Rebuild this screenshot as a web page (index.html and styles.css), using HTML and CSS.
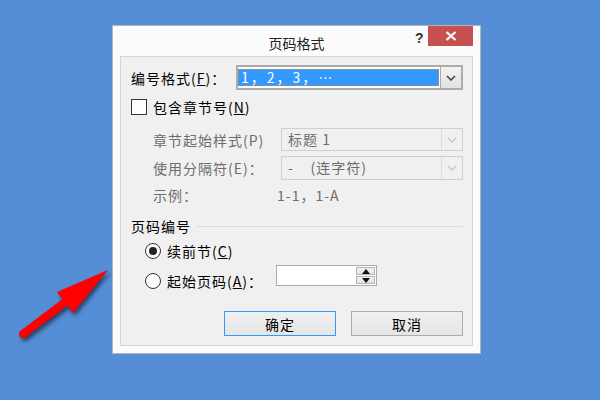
FILE: index.html
```html
<!DOCTYPE html>
<html>
<head>
<meta charset="utf-8">
<link rel="stylesheet" href="styles.css">
</head>
<body>
<div class="desk">
  <div class="dialog">
    <div class="titlebar">
      <span class="title">页码格式</span>
      <span class="help">?</span>
      <span class="close"><svg width="12" height="10" viewBox="0 0 12 10"><path d="M1.5 1 L10.5 9 M10.5 1 L1.5 9" stroke="#fff" stroke-width="2.2" fill="none"/></svg></span>
    </div>
    <div class="panel">
      <div class="row r-fmt">
        <span class="lbl w-main">编号格式(<u>F</u>)：</span>
        <div class="combo focus">
          <div class="sel">1，2，3，…</div>
          <div class="dbtn"><svg width="10" height="6" viewBox="0 0 10 6"><path d="M1 1 L5 5 L9 1" stroke="#444" stroke-width="1.6" fill="none"/></svg></div>
        </div>
      </div>
      <div class="row r-chk">
        <span class="box"></span>
        <span class="lbl">包含章节号(<u>N</u>)</span>
      </div>
      <div class="row r-sub1 sub">
        <span class="lbl w-sub dis">章节起始样式(P)</span>
        <div class="combo off">
          <div class="val">标题 1</div>
          <div class="dbtn"><svg width="10" height="6" viewBox="0 0 10 6"><path d="M1 1 L5 5 L9 1" stroke="#c8c8c8" stroke-width="1.4" fill="none"/></svg></div>
        </div>
      </div>
      <div class="row r-sub2 sub">
        <span class="lbl w-sub dis">使用分隔符(E)：</span>
        <div class="combo off">
          <div class="val">-&nbsp;&nbsp;&nbsp;&nbsp;(连字符)</div>
          <div class="dbtn"><svg width="10" height="6" viewBox="0 0 10 6"><path d="M1 1 L5 5 L9 1" stroke="#c8c8c8" stroke-width="1.4" fill="none"/></svg></div>
        </div>
      </div>
      <div class="row r-ex sub">
        <span class="lbl w-ex dis">示例：</span>
        <span class="lbl dis">1-1，1-A</span>
      </div>
      <div class="row r-grp">
        <span class="lbl">页码编号</span>
        <span class="rule"></span>
      </div>
      <div class="row r-rad1 rad">
        <span class="radio on"></span>
        <span class="lbl">续前节(<u>C</u>)</span>
      </div>
      <div class="row r-rad2 rad">
        <div class="radlbl">
          <span class="radio"></span>
          <span class="lbl w-rad">起始页码(<u>A</u>)：</span>
        </div>
        <div class="spin">
          <div class="spin-in"></div>
          <div class="spin-btns">
            <div class="sb"><svg width="8" height="5" viewBox="0 0 8 5"><path d="M0 5 L4 0 L8 5 Z" fill="#111"/></svg></div>
            <div class="sb"><svg width="8" height="5" viewBox="0 0 8 5"><path d="M0 0 L4 5 L8 0 Z" fill="#111"/></svg></div>
          </div>
        </div>
      </div>
      <div class="row r-btns">
        <div class="btn default">确定</div>
        <div class="btn">取消</div>
      </div>
    </div>
  </div>
  <svg class="arrow" width="110" height="100" viewBox="10 255 110 100">
    <g class="arrow-g">
      <path d="M23 334 L72 297" stroke="#ff0000" stroke-width="8" stroke-linecap="round" fill="none"/>
      <path d="M108 270 L57 292 L73 313 Z" fill="#ff0000"/>
    </g>
  </svg>
</div>
</body>
</html>
```
FILE: styles.css
```css
* { box-sizing: border-box; }
html, body { margin: 0; padding: 0; }
body {
  background: #558ed6;
  font-family: "Noto Sans CJK SC", "Liberation Sans", sans-serif;
  font-size: 14px;
  color: #000;
}
.desk {
  position: relative;
  width: 600px;
  height: 400px;
  padding: 25px 0 0 112px;
}
.dialog {
  width: 369px;
  height: 329px;
  background: #fbfbfb;
  border: 1px solid #b4b4b4;
  padding: 0 7px 7px 7px;
  display: flex;
  flex-direction: column;
}
.titlebar {
  position: relative;
  height: 30px;
  display: flex;
  align-items: center;
  justify-content: center;
}
.title {
  font-size: 14px;
  line-height: 16px;
  color: #222;
  margin-top: 3px;
}
.help {
  position: absolute;
  left: 295px;
  top: 4px;
  font-family: "Liberation Sans", sans-serif;
  font-weight: bold;
  font-size: 14px;
  color: #333;
}
.close {
  position: absolute;
  right: 0;
  top: 0;
  width: 45px;
  height: 20px;
  background: #c75050;
  display: flex;
  align-items: center;
  justify-content: center;
}
.close svg { display: block; }
.panel {
  flex: 1;
  background: #f0f0f0;
  border: 1px solid #d5d5d5;
  padding: 8px 9px 0 10px;
  display: flex;
  flex-direction: column;
}
.row {
  display: flex;
  align-items: center;
}
.lbl {
  white-space: nowrap;
  line-height: 16px;
  letter-spacing: 1px;
}
.lbl u { text-decoration: underline; text-underline-offset: 1px; }
.dis { color: #6d6d6d; }
.w-main { width: 105px; }
.w-sub { width: 128px; }
.w-ex { width: 124px; }
.w-rad { width: 109px; }
.sub { padding-left: 22px; }

.r-fmt { height: 25px; }
.combo {
  flex: 1;
  display: flex;
  height: 100%;
  background: #fff;
}
.combo.focus {
  border: 2px solid #ababab;
  padding: 2px 0 2px 0;
  background: #fff;
}
.sel {
  flex: 1;
  background: #3399ff;
  color: #fff;
  outline: 1px dotted #c98a3a;
  outline-offset: -1px;
  padding-left: 3px;
  line-height: 17px;
  letter-spacing: 2px;
  font-size: 14px;
}
.combo.focus .dbtn {
  width: 21px;
  margin: -2px 0 -2px 1px;
  background: linear-gradient(#f2f2f2, #e3e3e3);
  border-left: 1px solid #ababab;
  display: flex;
  align-items: center;
  justify-content: center;
}
.r-chk { height: 16px; margin-top: 9px; }
.box {
  width: 16px;
  height: 16px;
  border: 1px solid #333;
  background: #fff;
  margin-right: 6px;
}
.r-sub1 { height: 23px; margin-top: 13px; }
.r-sub2 { height: 24px; margin-top: 5px; }
.combo.off {
  border: 1px solid #d0d0d0;
  background: #f0f0f0;
  color: #6d6d6d;
}
.val {
  flex: 1;
  padding-left: 6px;
  line-height: 21px;
  letter-spacing: 1px;
}
.combo.off .dbtn {
  width: 21px;
  border-left: 1px solid #dcdcdc;
  display: flex;
  align-items: center;
  justify-content: center;
}
.r-ex { height: 17px; margin-top: 6px; }
.r-grp { height: 16px; margin-top: 15px; }
.rule {
  flex: 1;
  height: 1px;
  background: #dcdcdc;
  margin-left: 6px;
}
.rad { padding-left: 14px; }
.r-rad1 { height: 16px; margin-top: 9px; }
.radio {
  width: 16px;
  height: 16px;
  border: 1px solid #333;
  border-radius: 50%;
  background: #fff;
  margin-right: 6px;
  display: flex;
  align-items: center;
  justify-content: center;
}
.radio.on::after {
  content: "";
  width: 8px;
  height: 8px;
  border-radius: 50%;
  background: #222;
}
.r-rad2 { height: 21px; margin-top: 6px; align-items: flex-start; }
.radlbl {
  display: flex;
  align-items: center;
  height: 16px;
  margin-top: 8px;
}
.spin {
  width: 101px;
  height: 21px;
  border: 1px solid #ababab;
  background: #fff;
  display: flex;
  padding: 1px 1px 1px 0;
}
.spin-in { flex: 1; }
.spin-btns {
  width: 19px;
  display: flex;
  flex-direction: column;
  gap: 1px;
}
.sb {
  flex: 1;
  background: linear-gradient(#f2f2f2, #e2e2e2);
  border: 1px solid #b5b5b5;
  display: flex;
  align-items: center;
  justify-content: center;
}
.sb svg { display: block; }
.r-btns {
  margin-top: 25px;
  justify-content: flex-end;
  gap: 15px;
}
.btn {
  width: 112px;
  height: 25px;
  border: 1px solid #acacac;
  background: linear-gradient(#f0f0f0, #e5e5e5);
  display: flex;
  align-items: center;
  justify-content: center;
  font-size: 14px;
  letter-spacing: 1px;
}
.btn.default { border-color: #3399ff; }
.arrow {
  position: absolute;
  left: 10px;
  top: 255px;
  overflow: visible;
}
.arrow-g { filter: drop-shadow(2px 3px 2px rgba(0,0,0,0.55)); }
```
